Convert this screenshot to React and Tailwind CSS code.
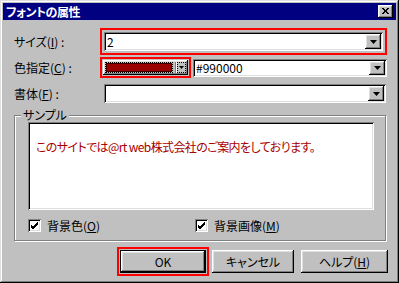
const raised =
  'shadow-[inset_-1px_-1px_#000,inset_1px_1px_#fff,inset_-2px_-2px_#808080,inset_2px_2px_#dfdfdf]';
const sunken =
  'shadow-[inset_1px_1px_#808080,inset_-1px_-1px_#fff,inset_2px_2px_#000,inset_-2px_-2px_#dfdfdf]';

function Arrow() {
  return (
    <svg width="7" height="4" viewBox="0 0 7 4">
      <polygon points="0,0 7,0 3.5,4" fill="#000" />
    </svg>
  );
}

function DropButton() {
  return (
    <div className={`w-[16px] h-full flex items-center justify-center bg-[#c0c0c0] ${raised}`}>
      <Arrow />
    </div>
  );
}

function Combo({ value, className }) {
  return (
    <div className={`flex bg-white p-[2px] ${sunken} ${className}`}>
      <div className="flex-1 flex items-center pl-[1px] text-black">{value}</div>
      <DropButton />
    </div>
  );
}

function Check({ label, u }) {
  return (
    <div className="flex items-center gap-[6px]">
      <div className={`w-[13px] h-[13px] bg-white flex items-center justify-center ${sunken}`}>
        <svg width="7" height="7" viewBox="0 0 7 7">
          <path d="M0 3 L2 5 L7 0 M0 4 L2 6 L7 1 M0 5 L2 7 L7 2" stroke="#000" strokeWidth="1" fill="none" />
        </svg>
      </div>
      <span>
        {label}(<u>{u}</u>)
      </span>
    </div>
  );
}

function Button({ children, className }) {
  return (
    <div className={`h-[23px] flex items-center justify-center bg-[#c0c0c0] ${raised} ${className}`}>
      {children}
    </div>
  );
}

export default function App() {
  return (
    <div
      className={`w-[399px] h-[283px] bg-[#c0c0c0] p-[3px] flex flex-col text-[12px] leading-none text-black [font-family:'Noto_Sans_CJK_JP',sans-serif] [font-feature-settings:'palt'] shadow-[inset_-1px_-1px_#000,inset_1px_1px_#dfdfdf,inset_-2px_-2px_#808080,inset_2px_2px_#fff]`}
    >
      {/* title bar */}
      <div className="h-[17px] bg-[#000080] flex items-center justify-between pl-[3px] pr-[3px]">
        <span className="text-white font-bold text-[12px] tracking-[-0.5px]">フォントの属性</span>
        <div className={`w-[15px] h-[13px] bg-[#c0c0c0] flex items-center justify-center ${raised}`}>
          <svg width="8" height="7" viewBox="0 0 8 7">
            <path d="M0 0 L6 6 M1 0 L7 6 M6 0 L0 6 M7 0 L1 6" stroke="#000" strokeWidth="1" fill="none" />
          </svg>
        </div>
      </div>

      <div className="flex-1 flex flex-col pl-[11px]">
        {/* size */}
        <div className="mt-[8px] flex items-center h-[27px]">
          <div className="w-[86px]">
            サイズ(<u>I</u>) :
          </div>
          <div className="w-[287px] h-full border-2 border-[#ff0000] p-[2px]">
            <Combo value="2" className="h-full" />
          </div>
        </div>

        {/* color */}
        <div className="mt-[2px] flex items-center h-[21px]">
          <div className="w-[86px]">
            色指定(<u>C</u>) :
          </div>
          <div className="w-[91px] h-full border-2 border-[#ff0000] p-[1px]">
            <div className={`h-full flex bg-[#c0c0c0] p-[2px] ${raised}`}>
              <div className="flex-1 border border-dotted border-black">
                <div className="h-full bg-[#990000] border border-[#400000]" />
              </div>
              <div className="w-[1px] bg-[#808080] ml-[2px]" />
              <div className="w-[1px] bg-white" />
              <div className="w-[9px] flex items-center justify-center border border-dotted border-black">
                <svg width="5" height="3" viewBox="0 0 5 3">
                  <polygon points="0,0 5,0 2.5,3" fill="#000" />
                </svg>
              </div>
            </div>
          </div>
          <Combo value="#990000" className="ml-[2px] w-[194px] h-[18px]" />
        </div>

        {/* font face */}
        <div className="mt-[6px] flex items-center h-[19px]">
          <div className="w-[90px]">
            書体(<u>F</u>) :
          </div>
          <Combo value="" className="w-[282px] h-full" />
        </div>

        {/* sample group */}
        <div className="relative mt-[12px] w-[372px] h-[126px] border border-[#808080] shadow-[inset_1px_1px_#fff,1px_1px_#fff] flex flex-col">
          <span className="absolute left-[6px] top-[-7px] bg-[#c0c0c0] px-[2px]">サンプル</span>
          <div className={`mt-[6px] ml-[13px] w-[346px] h-[88px] bg-white p-[2px] ${sunken}`}>
            <div className="pt-[17px] pl-[6px] text-[#a80000] tracking-[-0.6px]">
              このサイトでは@rt web株式会社のご案内をしております。
            </div>
          </div>
          <div className="mt-[9px] ml-[13px] flex items-center">
            <div className="w-[167px]">
              <Check label="背景色" u="O" />
            </div>
            <Check label="背景画像" u="M" />
          </div>
        </div>

        {/* buttons */}
        <div className="mt-[6px] flex items-center">
          <div className="ml-[103px] w-[92px] h-[29px] border-2 border-[#ff0000] p-[1px]">
            <div className="h-full border border-black">
              <Button className="h-full">OK</Button>
            </div>
          </div>
          <Button className="ml-[3px] w-[82px]">キャンセル</Button>
          <Button className="ml-[7px] w-[87px]">
            <span>
              ヘルプ(<u>H</u>)
            </span>
          </Button>
        </div>
      </div>
    </div>
  );
}
